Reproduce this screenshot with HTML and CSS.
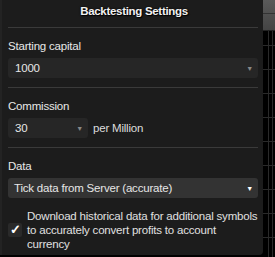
FILE: index.html
```html
<!DOCTYPE html>
<html>
<head>
<meta charset="utf-8">
<link rel="stylesheet" href="styles.css">
</head>
<body>
<div class="screen">
  <div class="panel">
    <div class="title">Backtesting Settings</div>
    <div class="section">
      <div class="label">Starting capital</div>
      <div class="select wide dim"><span>1000</span><span class="arrow">▼</span></div>
    </div>
    <div class="section">
      <div class="label">Commission</div>
      <div class="row">
        <div class="select small dim"><span>30</span><span class="arrow">▼</span></div>
        <span class="unit">per Million</span>
      </div>
    </div>
    <div class="section last">
      <div class="label">Data</div>
      <div class="select wide bright"><span>Tick data from Server (accurate)</span><span class="arrow">▼</span></div>
      <div class="check">
        <div class="box">✓</div>
        <div class="checktext">Download historical data for additional symbols to accurately convert profits to account currency</div>
      </div>
    </div>
  </div>
  <div class="side">
    <div class="thumb"></div>
    <div class="grid"></div>
  </div>
</div>
</body>
</html>
```
FILE: styles.css
```css
* { box-sizing: border-box; }
html, body { margin: 0; padding: 0; background: #000; }
body { font-family: "Liberation Sans", Arial, sans-serif; color: #e6e6e6; letter-spacing: -0.2px; }
.screen { display: flex; width: 275px; height: 257px; overflow: hidden; }
.panel {
  width: 263px; height: 255px; background: #1c1c1c;
  border-left: 2px solid #232323;
  border-bottom-right-radius: 4px;
  padding: 0 5px 0 6px;
}
.title {
  height: 28px; line-height: 23px; text-align: center;
  font-weight: bold; font-size: 11.5px; letter-spacing: -0.3px; color: #f2f2f2;
  text-shadow: 0 0 2px #000, 1px 1px 1px #000;
  border-bottom: 1px solid #3a3a3a;
  padding-left: 2px;
}
.section { border-bottom: 1px solid #3a3a3a; padding: 11px 0 9px 0; height: 60px; }
.section.last { border-bottom: none; height: auto; padding-top: 11px; }
.label { font-size: 11.5px; line-height: 15px; color: #e8e8e8; margin-bottom: 4px; }
.select {
  height: 20px; border-radius: 3px; display: flex; align-items: center;
  justify-content: space-between; padding: 0 5px 0 7px; font-size: 11.5px;
}
.select.dim { background: #262626; }
.select.bright { background: #333; padding-left: 6px; }
.wide { width: 250px; }
.small { width: 80px; }
.arrow { font-size: 7px; color: #888; }
.bright .arrow { color: #fff; }
.row { display: flex; align-items: center; gap: 5px; }
.unit { font-size: 11.5px; color: #ddd; }
.check { display: flex; align-items: center; margin-top: 11px; gap: 5px; }
.box {
  width: 14px; height: 14px; flex: none; background: #2a2a2a; border-radius: 2px;
  color: #fff; font-size: 13px; font-weight: bold; line-height: 14px; text-align: center;
}
.checktext { font-size: 11.5px; line-height: 14px; color: #e0e0e0; width: 234px; }
.side { flex: 1; position: relative; background: #000; }
.thumb { height: 31px; background: linear-gradient(#5a5a5a, #444); border-bottom: 1px solid #222; position: relative; }
.thumb::after { content: ""; position: absolute; left: 0; right: 0; top: 13px; height: 1px; background: #333; }
.grid {
  height: 226px;
  background-image:
    linear-gradient(90deg, transparent 5px, #2a2a2a 5px, #2a2a2a 6px, transparent 6px, transparent 9px, #2a2a2a 9px, #2a2a2a 10px, transparent 10px),
    repeating-linear-gradient(180deg, transparent 0 14px, #2a2a2a 14px 15px, transparent 15px 24px);
}
```
